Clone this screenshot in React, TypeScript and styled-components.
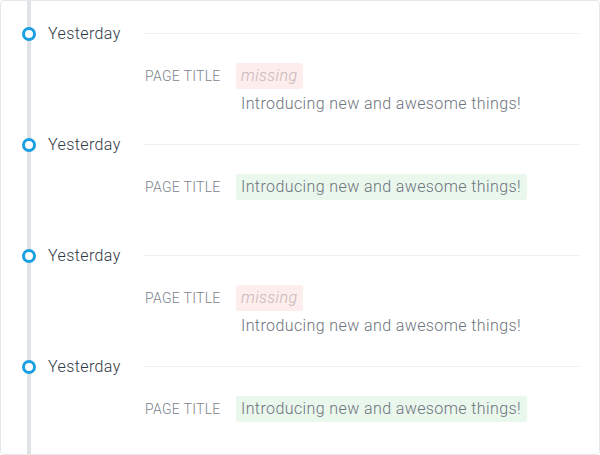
import React from "react";
import styled, { createGlobalStyle } from "styled-components";

const Global = createGlobalStyle`
  html, body { margin: 0; padding: 0; background: #ffffff; }
  body { font-family: Roboto, "Noto Sans", Arial, sans-serif; }
  * { box-sizing: border-box; }
`;

const Card = styled.div`
  width: 600px;
  height: 455px;
  border: 1px solid #e6e7e9;
  border-radius: 4px;
  background: #ffffff;
  overflow: hidden;
  padding-right: 19px;
`;

const Timeline = styled.div`
  margin-left: 26px;
  padding-top: 21px;
  border-left: 4px solid #dfe2e6;
  min-height: 480px;
`;

const Entry = styled.div`
  position: relative;
  min-height: 111px;
  padding-left: 17px;
`;

const Dot = styled.span`
  position: absolute;
  left: -9px;
  top: 5px;
  width: 14px;
  height: 14px;
  border-radius: 50%;
  border: 3px solid #1b9fe3;
  background: #ffffff;
`;

const Header = styled.div`
  display: flex;
  align-items: center;
  height: 24px;
`;

const Day = styled.span`
  width: 95px;
  font-size: 16px;
  line-height: 24px;
  font-weight: 300;
  color: #2f3845;
  letter-spacing: 0.4px;
`;

const Divider = styled.div`
  flex: 1;
  height: 1px;
  margin-top: -1px;
  background: #eeeff0;
`;

const Change = styled.div`
  display: grid;
  grid-template-columns: 91px auto;
  align-items: start;
  margin-top: 17px;
  padding-left: 97px;
`;

const Label = styled.span`
  font-size: 14px;
  line-height: 26px;
  font-weight: 300;
  letter-spacing: 0.3px;
  color: #7d848c;
  text-transform: uppercase;
`;

const Values = styled.div`
  display: flex;
  flex-direction: column;
  align-items: flex-start;
`;

const Badge = styled.span<{ $tone: "removed" | "added" }>`
  display: inline-block;
  padding: 2px 6px 2px 5px;
  border-radius: 3px;
  font-size: 16px;
  line-height: 22px;
  font-weight: 300;
  letter-spacing: 0.4px;
  background: ${(p) => (p.$tone === "removed" ? "#fdeded" : "#eaf7ed")};
  color: ${(p) => (p.$tone === "removed" ? "#c6b8b9" : "#6c737c")};
  font-style: ${(p) => (p.$tone === "removed" ? "italic" : "normal")};
`;

const NewValue = styled.span`
  margin-top: 3px;
  padding-left: 5px;
  font-size: 16px;
  line-height: 24px;
  font-weight: 300;
  letter-spacing: 0.4px;
  color: #6c737c;
`;

type Item = { day: string; before?: string; after: string };

const items: Item[] = [
  { day: "Yesterday", before: "missing", after: "Introducing new and awesome things!" },
  { day: "Yesterday", after: "Introducing new and awesome things!" },
  { day: "Yesterday", before: "missing", after: "Introducing new and awesome things!" },
  { day: "Yesterday", after: "Introducing new and awesome things!" },
];

export default function App() {
  return (
    <>
      <Global />
      <Card>
        <Timeline>
          {items.map((it, i) => (
            <Entry key={i}>
              <Dot />
              <Header>
                <Day>{it.day}</Day>
                <Divider />
              </Header>
              <Change>
                <Label>Page title</Label>
                <Values>
                  {it.before ? (
                    <>
                      <Badge $tone="removed">{it.before}</Badge>
                      <NewValue>{it.after}</NewValue>
                    </>
                  ) : (
                    <Badge $tone="added">{it.after}</Badge>
                  )}
                </Values>
              </Change>
            </Entry>
          ))}
        </Timeline>
      </Card>
    </>
  );
}
